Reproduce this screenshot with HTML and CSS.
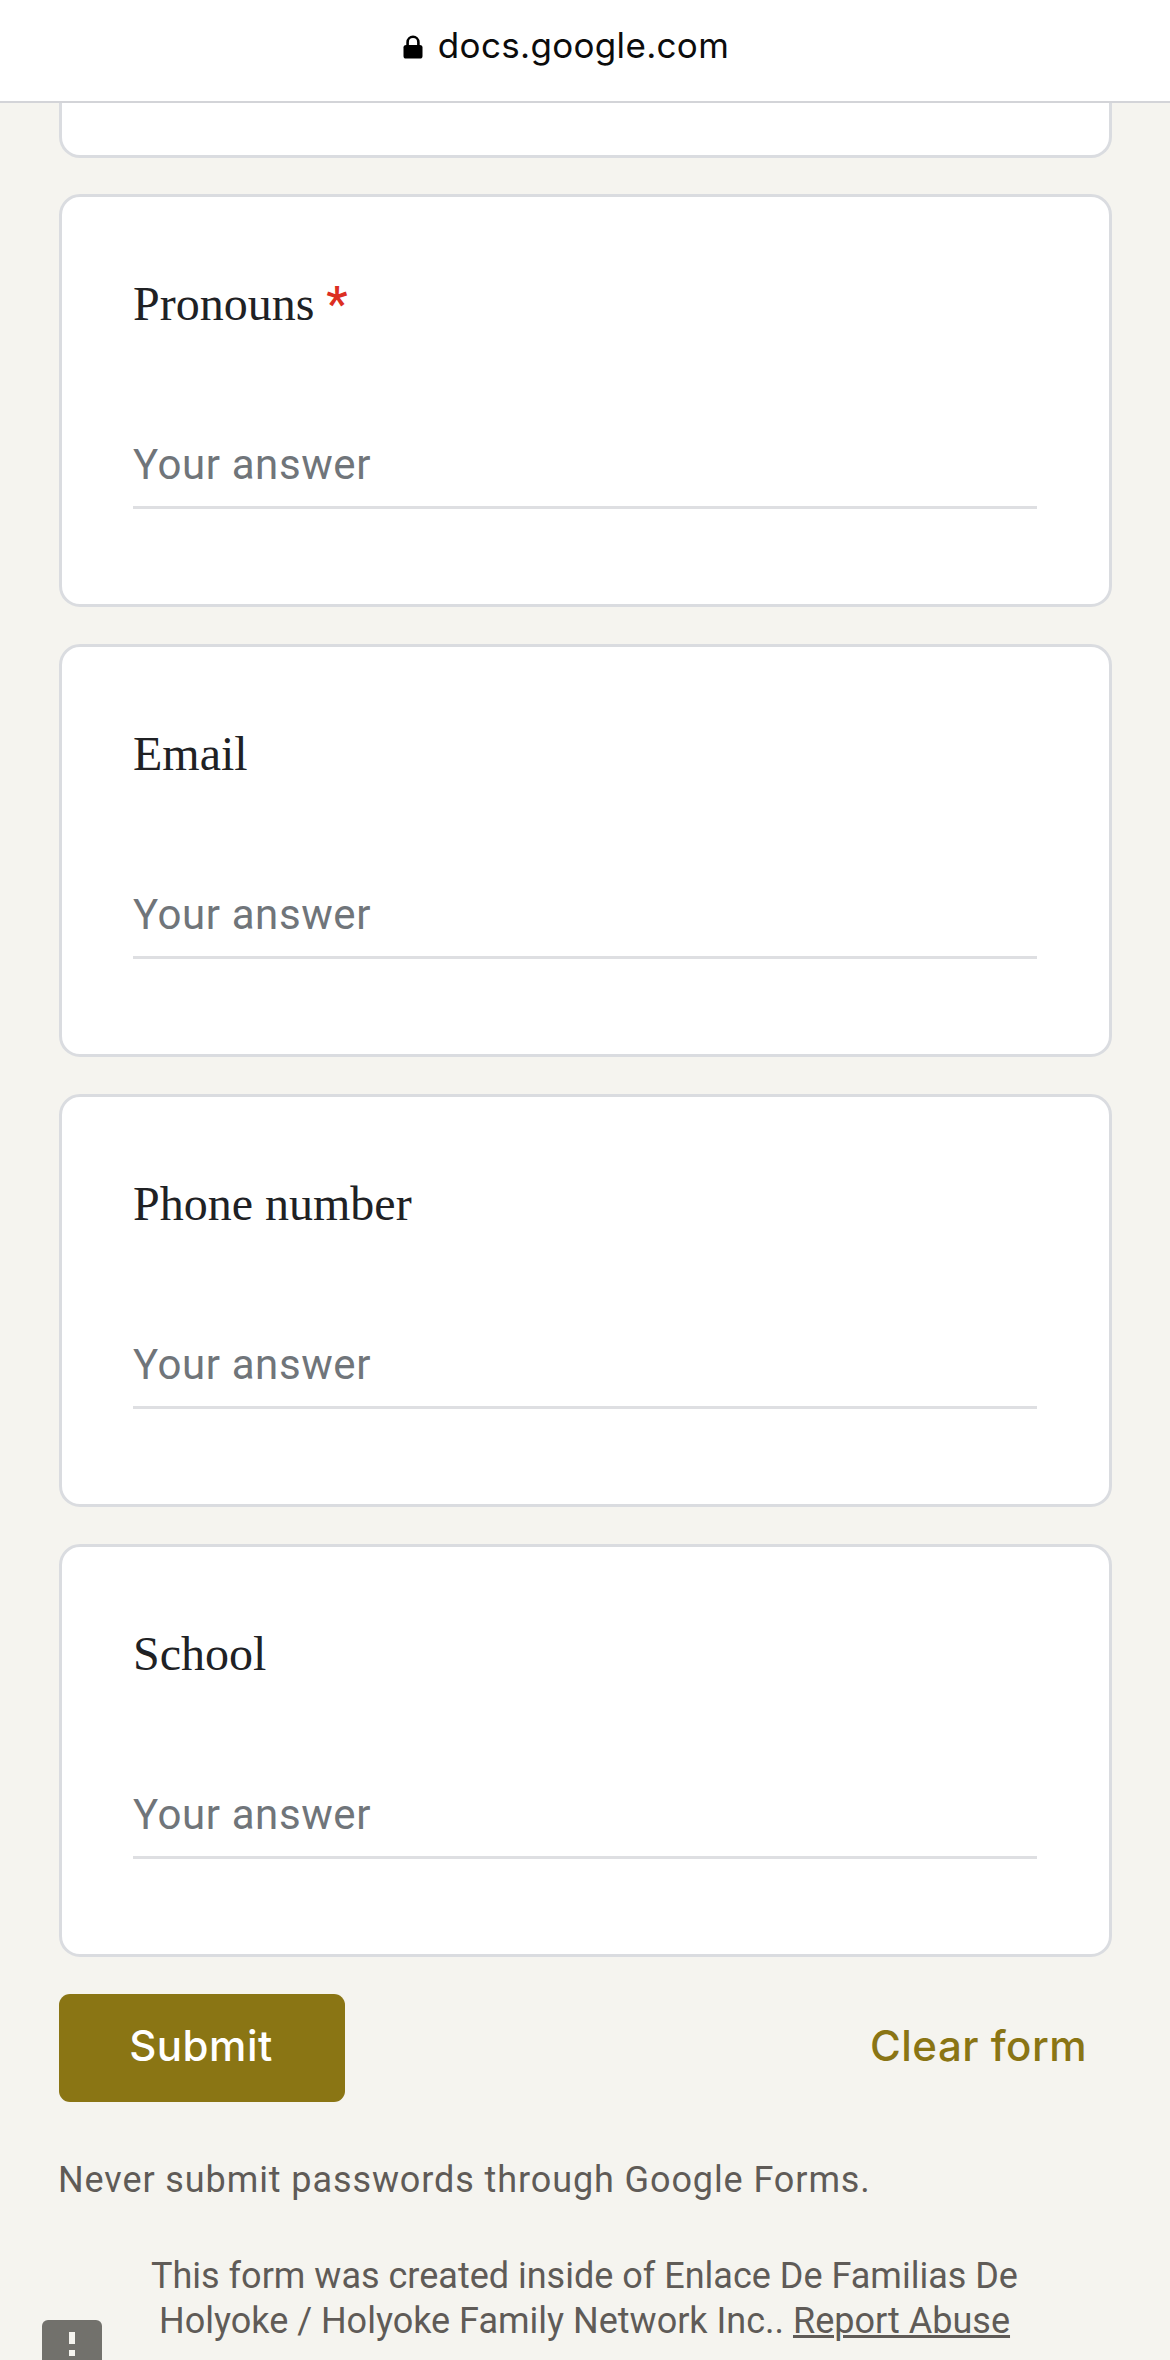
FILE: index.html
```html
<!DOCTYPE html>
<html lang="en">
<head>
<meta charset="utf-8">
<title>Google Forms</title>
<link rel="stylesheet" href="styles.css">
</head>
<body>
<header class="topbar">
  <svg class="lock" viewBox="0 0 20 24" aria-hidden="true"><path class="lock-bow" d="M4.6 11V7.2a5.4 5.4 0 0 1 10.8 0V11"/><rect class="lock-body" x="0.5" y="10" width="19" height="13.5" rx="2.6"/></svg>
  <span class="url">docs.google.com</span>
</header>
<main class="form">
  <div class="card card-tail"></div>
  <section class="card">
    <h2 class="question">Pronouns <span class="req">*</span></h2>
    <div class="answer">Your answer</div>
  </section>
  <section class="card">
    <h2 class="question">Email</h2>
    <div class="answer">Your answer</div>
  </section>
  <section class="card">
    <h2 class="question">Phone number</h2>
    <div class="answer">Your answer</div>
  </section>
  <section class="card">
    <h2 class="question">School</h2>
    <div class="answer">Your answer</div>
  </section>
  <div class="actions">
    <span class="submit">Submit</span>
    <span class="clear">Clear form</span>
  </div>
  <p class="warning">Never submit passwords through Google Forms.</p>
  <p class="notice">This form was created inside of Enlace De Familias De Holyoke / Holyoke Family Network Inc.. <a class="abuse" href="#">Report Abuse</a></p>
</main>
<div class="feedback"><span class="bang"></span><span class="dot"></span></div>
</body>
</html>
```
FILE: styles.css
```css
* { box-sizing: border-box; }
html, body { margin: 0; padding: 0; }
body {
  width: 1170px;
  height: 2360px;
  overflow: hidden;
  position: relative;
  background: #f5f4ef;
  font-family: Roboto, sans-serif;
}
.topbar {
  height: 103px;
  background: #fff;
  border-bottom: 2px solid #d3d4d8;
  display: flex;
  align-items: center;
  justify-content: center;
  gap: 15px;
  padding: 0 38px 11px 0;
}
.lock { width: 20px; height: 24px; margin-top: 4px; }
.lock-bow { fill: none; stroke: #000; stroke-width: 2.6; }
.lock-body { fill: #000; }
.url {
  font-family: Inter, sans-serif;
  font-size: 35px;
  color: #0c0c0c;
  letter-spacing: 0.32px;
}
.form {
  padding: 0 58px 0 59px;
  display: flex;
  flex-direction: column;
}
.card {
  height: 413px;
  margin-bottom: 37px;
  background: #fff;
  border: 3px solid #dadce0;
  border-radius: 21px;
  padding: 77px 72px 0 71px;
}
.card-tail {
  height: 55px;
  margin-bottom: 36px;
  border-top: 0;
  border-radius: 0 0 21px 21px;
  padding: 0;
}
.question {
  margin: 0;
  font-family: "Liberation Serif", serif;
  font-weight: 400;
  font-size: 48px;
  line-height: 60px;
  color: #202124;
}
.req {
  color: #dc2e22;
  font-family: Roboto, sans-serif;
  font-weight: 500;
  font-size: 48px;
}
.answer {
  margin-top: 101px;
  height: 74px;
  border-bottom: 3px solid #dedfe2;
  font-size: 42px;
  line-height: 60px;
  letter-spacing: 0.6px;
  color: #70757a;
}
.actions {
  display: flex;
  align-items: center;
  justify-content: space-between;
  height: 108px;
}
.submit {
  width: 286px;
  height: 108px;
  background: #8a7514;
  border-radius: 11px;
  color: #fff;
  font-family: Inter, sans-serif;
  font-weight: 500;
  font-size: 42px;
  letter-spacing: 0.5px;
  display: flex;
  align-items: center;
  justify-content: center;
  padding: 0 2px 5px 0;
}
.clear {
  font-family: Inter, sans-serif;
  font-weight: 500;
  font-size: 42px;
  letter-spacing: 0.5px;
  color: #8a7514;
  padding: 0 25px 5px 0;
}
.warning {
  margin: 53px 0 0 -1px;
  font-size: 36px;
  line-height: 50px;
  letter-spacing: 0.9px;
  color: #5f5b57;
}
.notice {
  margin: 49px 0 0;
  padding: 0 62px 0 60px;
  text-align: center;
  font-size: 36px;
  line-height: 45px;
  letter-spacing: 0;
  color: #5f5b57;
}
.abuse {
  color: inherit;
  text-decoration: underline;
  text-decoration-thickness: 3px;
}
.feedback {
  position: absolute;
  left: 42px;
  top: 2320px;
  width: 60px;
  height: 60px;
  background: #72716c;
  border-radius: 6px;
  display: flex;
  flex-direction: column;
  align-items: center;
  padding-top: 12px;
  gap: 6px;
}
.bang { width: 6px; height: 12px; background: #f5f4ef; }
.dot { width: 6px; height: 6px; background: #f5f4ef; }
```
